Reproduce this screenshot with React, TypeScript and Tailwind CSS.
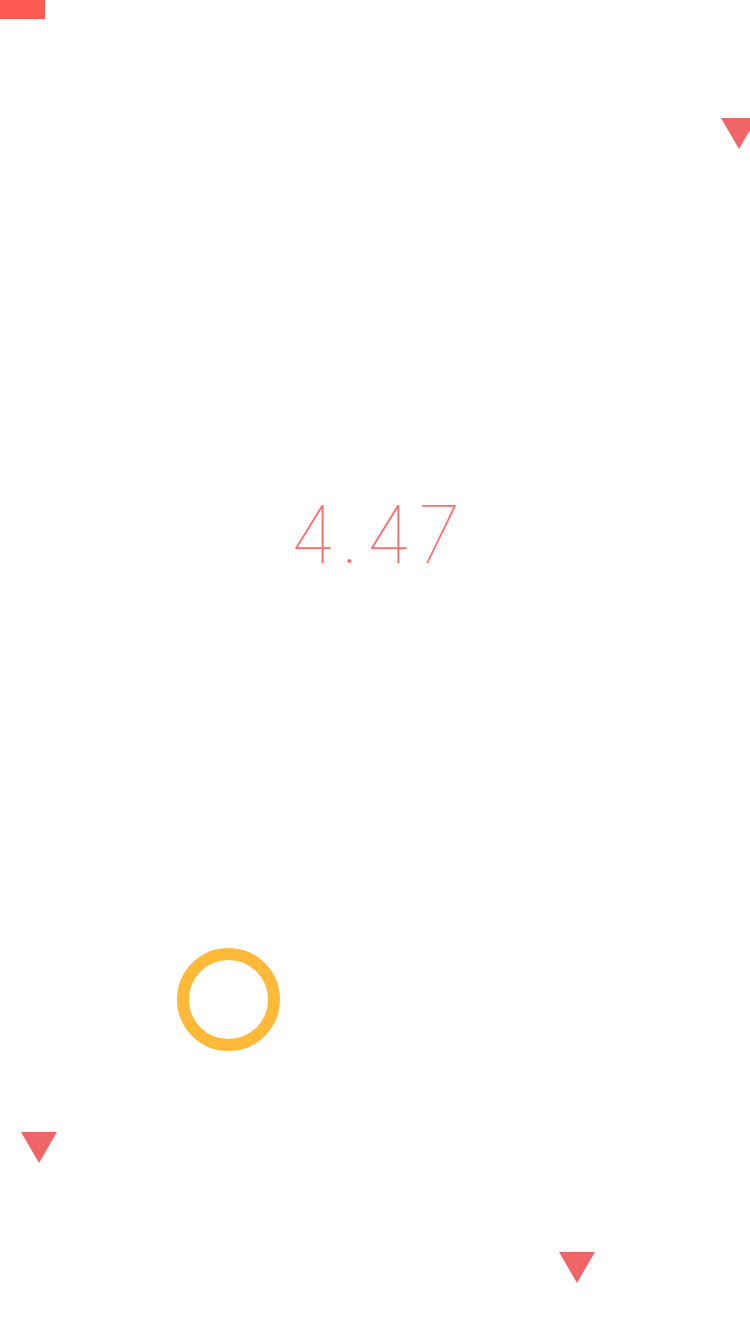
import React from 'react';

const Tri = ({ className }: { className: string }) => (
  <svg className={`absolute ${className}`} width="36" height="31" viewBox="0 0 36 31">
    <polygon points="0,0 36,0 18,31" fill="#ef6466" />
  </svg>
);

const App = () => {
  return (
    <div className="relative w-[750px] h-[1334px] overflow-hidden bg-white">
      <div className="absolute left-0 top-0 w-[45px] h-[19px] bg-[#ff5b52]" />
      <Tri className="left-[721px] top-[118px]" />
      <Tri className="left-[21px] top-[1132px]" />
      <Tri className="left-[559px] top-[1252px]" />
      <div className="absolute left-[177px] top-[948px] w-[103px] h-[103px] rounded-full border-[12px] border-[#ffb938]" />
      <div className="absolute left-0 right-0 top-[484px] flex justify-center">
        <span
          className="pl-[5px] text-[79px] leading-[100px] font-thin tracking-[5px] text-[#ff6b6b]"
          style={{ fontFamily: 'Inter, sans-serif' }}
        >
          4.47
        </span>
      </div>
    </div>
  );
};

export default App;
